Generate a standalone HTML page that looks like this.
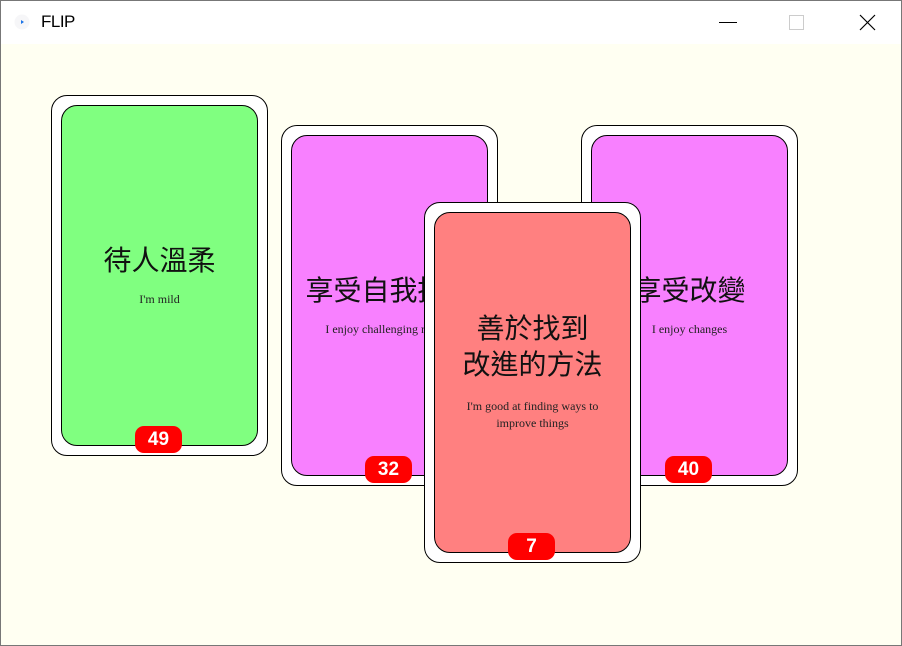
<!DOCTYPE html>
<html><head><meta charset="utf-8"><style>
*{margin:0;padding:0;box-sizing:border-box}
body{width:902px;height:646px;overflow:hidden;background:#fff;position:relative;font-family:"Liberation Sans","Noto Sans CJK TC",sans-serif}
.win{position:absolute;left:0;top:0;width:902px;height:646px;border:1px solid #777}
.tb{position:absolute;left:1px;top:1px;width:900px;height:43px;background:#fff}
.main{position:absolute;left:1px;top:44px;width:900px;height:601px;background:#fffff2}
.card{position:absolute;width:217px;height:361px;background:#fff;border:1px solid #000;border-radius:16px}
.in{position:absolute;left:9px;top:9px;width:197px;height:341px;border:1px solid #000;border-radius:16px;display:flex;flex-direction:column;align-items:center;justify-content:center;padding-bottom:0;text-align:center;white-space:nowrap}
.t{font-size:28px;line-height:36px;color:#111;font-family:"Liberation Sans","Noto Sans CJK TC",sans-serif}
.s{font-family:"Liberation Serif",serif;font-size:12px;line-height:17px;color:#222;margin-top:12px}
.b{position:absolute;left:83px;bottom:2px;width:47px;height:27px;background:#f00;border-radius:9px;color:#fff;font-weight:bold;font-size:19px;line-height:27px;text-align:center}
</style></head><body>
<div class="win"></div>
<div class="tb">
<svg style="position:absolute;left:13px;top:13px" width="16" height="16"><circle cx="8" cy="8" r="7.5" fill="#f6f6f8"/><path d="M7 6l3 2-3 2z" fill="#1a73e8"/></svg>
<div style="position:absolute;left:40px;top:11px;font-size:17px;letter-spacing:-0.5px;color:#000">FLIP</div>
<div style="position:absolute;left:718px;top:21px;width:18px;height:1px;background:#000"></div>
<div style="position:absolute;left:788px;top:14px;width:15px;height:15px;border:1px solid #ccc"></div>
<svg style="position:absolute;left:858px;top:13px" width="17" height="17"><path d="M1 1L16 16M16 1L1 16" stroke="#000" stroke-width="1.2"/></svg>
</div>
<div class="main"></div>
<div class="card" style="left:51px;top:95px"><div class="in" style="background:#80ff80"><div class="t">待人溫柔</div><div class="s">I'm mild</div></div><div class="b">49</div></div>
<div class="card" style="left:281px;top:125px"><div class="in" style="background:#f880ff"><div class="t">享受自我挑戰</div><div class="s">I enjoy challenging myself</div></div><div class="b">32</div></div>
<div class="card" style="left:581px;top:125px"><div class="in" style="background:#f880ff"><div class="t">享受改變</div><div class="s">I enjoy changes</div></div><div class="b">40</div></div>
<div class="card" style="left:424px;top:202px"><div class="in" style="background:#ff8080;padding-bottom:22px"><div class="t">善於找到<br>改進的方法</div><div class="s" style="margin-top:15px">I'm good at finding ways to<br>improve things</div></div><div class="b">7</div></div>
</body></html>
